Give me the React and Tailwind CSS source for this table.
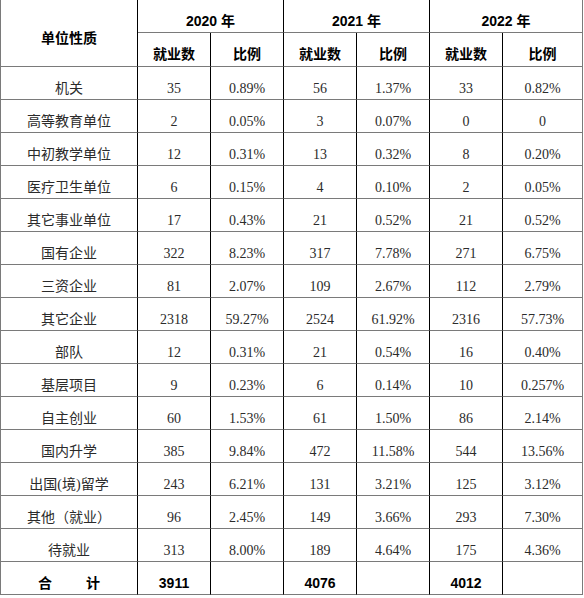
import React from "react";

const rows = [
  ["机关", "35", "0.89%", "56", "1.37%", "33", "0.82%"],
  ["高等教育单位", "2", "0.05%", "3", "0.07%", "0", "0"],
  ["中初教学单位", "12", "0.31%", "13", "0.32%", "8", "0.20%"],
  ["医疗卫生单位", "6", "0.15%", "4", "0.10%", "2", "0.05%"],
  ["其它事业单位", "17", "0.43%", "21", "0.52%", "21", "0.52%"],
  ["国有企业", "322", "8.23%", "317", "7.78%", "271", "6.75%"],
  ["三资企业", "81", "2.07%", "109", "2.67%", "112", "2.79%"],
  ["其它企业", "2318", "59.27%", "2524", "61.92%", "2316", "57.73%"],
  ["部队", "12", "0.31%", "21", "0.54%", "16", "0.40%"],
  ["基层项目", "9", "0.23%", "6", "0.14%", "10", "0.257%"],
  ["自主创业", "60", "1.53%", "61", "1.50%", "86", "2.14%"],
  ["国内升学", "385", "9.84%", "472", "11.58%", "544", "13.56%"],
  ["出国(境)留学", "243", "6.21%", "131", "3.21%", "125", "3.12%"],
  ["其他（就业）", "96", "2.45%", "149", "3.66%", "293", "7.30%"],
  ["待就业", "313", "8.00%", "189", "4.64%", "175", "4.36%"],
];

const serif = { fontFamily: '"Liberation Serif", "Noto Sans CJK SC", serif' };

function Cell({ children, last, first, bold, className = "" }) {
  return (
    <div
      className={
        "flex items-center justify-center h-[33px] pt-[10px] border-b border-b-[#7a7a7a] " +
        (last ? "border-r border-r-[#7a7a7a] " : "border-r border-r-black ") +
        (first ? "border-l border-l-[#7a7a7a] " : "") +
        (bold
          ? "font-bold text-black text-[14px] font-['Liberation_Sans','Noto_Sans_CJK_SC',sans-serif] "
          : "text-[#2b2b2b] text-[14px] font-['Liberation_Serif','Noto_Sans_CJK_SC',serif] ") +
        className
      }
    >
      {children}
    </div>
  );
}

export default function App() {
  return (
    <div className="w-[584px] h-[598px] bg-white overflow-hidden">
      <div className="grid grid-cols-[138px_73px_73px_73px_73px_73px_80px]">
        {/* header */}
        <div className="row-span-2 flex items-center justify-center h-[67px] pt-[10px] border-l border-l-[#7a7a7a] border-r border-r-black border-b border-b-[#7a7a7a] font-bold text-black text-[14px] font-['Liberation_Sans','Noto_Sans_CJK_SC',sans-serif]">
          单位性质
        </div>
        <Cell bold className="col-span-2">2020 年</Cell>
        <Cell bold className="col-span-2">2021 年</Cell>
        <Cell bold last className="col-span-2">2022 年</Cell>
        <Cell bold className="h-[34px]">就业数</Cell>
        <Cell bold className="h-[34px]">比例</Cell>
        <Cell bold className="h-[34px]">就业数</Cell>
        <Cell bold className="h-[34px]">比例</Cell>
        <Cell bold className="h-[34px]">就业数</Cell>
        <Cell bold last className="h-[34px]">比例</Cell>
        {rows.map((r, i) => (
          <React.Fragment key={i}>
            {r.map((v, j) => (
              <Cell key={j} first={j === 0} last={j === 6}>
                {v}
              </Cell>
            ))}
          </React.Fragment>
        ))}
        <Cell bold first>
          <span className="tracking-[0px]">合</span>
          <span className="ml-[34px]">计</span>
        </Cell>
        <Cell bold>3911</Cell>
        <Cell bold></Cell>
        <Cell bold>4076</Cell>
        <Cell bold></Cell>
        <Cell bold>4012</Cell>
        <Cell bold last></Cell>
      </div>
    </div>
  );
}
